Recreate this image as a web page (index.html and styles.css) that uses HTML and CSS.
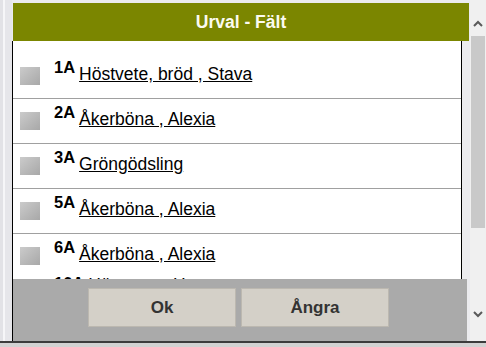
FILE: index.html
```html
<!DOCTYPE html>
<html lang="sv">
<head>
<meta charset="utf-8">
<title>Urval - Fält</title>
<link rel="stylesheet" href="styles.css">
</head>
<body>
<div class="screen">
  <div class="main">
    <div class="gutter"></div>
    <div class="dialog">
      <div class="title">Urval - Fält</div>
      <div class="frame">
        <div class="listwrap">
          <div class="list">
            <div class="row"><span class="cb"></span><span class="code">1A</span><a class="label" href="#">Höstvete, bröd , Stava</a></div>
            <div class="row"><span class="cb"></span><span class="code">2A</span><a class="label" href="#">Åkerböna , Alexia</a></div>
            <div class="row"><span class="cb"></span><span class="code">3A</span><a class="label" href="#">Gröngödsling</a></div>
            <div class="row"><span class="cb"></span><span class="code">5A</span><a class="label" href="#">Åkerböna , Alexia</a></div>
            <div class="row last"><span class="cb"></span><span class="code">6A</span><a class="label" href="#">Åkerböna , Alexia</a></div>
            <div class="row partial"><span class="cb"></span><span class="code">10A</span><a class="label" href="#">Höstraps , Hornet</a></div>
          </div>
        </div>
        <div class="actions">
          <button class="btn" type="button">Ok</button>
          <button class="btn" type="button">Ångra</button>
        </div>
      </div>
    </div>
    <div class="scrollbar">
      <div class="sb-up">
        <svg width="10" height="7" viewBox="0 0 10 7"><polyline points="1,6 5,2 9,6" fill="none" stroke="#5a5a5a" stroke-width="2"/></svg>
      </div>
      <div class="sb-thumb"></div>
      <div class="sb-space"></div>
      <div class="sb-down">
        <svg width="10" height="7" viewBox="0 0 10 7"><polyline points="1,1 5,5 9,1" fill="none" stroke="#5a5a5a" stroke-width="2"/></svg>
      </div>
    </div>
  </div>
  <div class="bottomline"></div>
</div>
</body>
</html>
```
FILE: styles.css
```css
html, body {
  margin: 0;
  padding: 0;
}
body {
  width: 486px;
  height: 347px;
  overflow: hidden;
  background: #e9e9ec;
  font-family: "Liberation Sans", Arial, sans-serif;
}
.screen {
  display: flex;
  flex-direction: column;
  height: 347px;
}
.main {
  display: flex;
  height: 341px;
}
.gutter {
  width: 12px;
  background: linear-gradient(to right, #e2e2e6 0 3px, #f6f6f8 3px 5px, #e6e6ea 5px);
}
.dialog {
  width: 458px;
  box-sizing: border-box;
  padding-top: 3px;
  display: flex;
  flex-direction: column;
  background: #ebebee;
}
.title {
  height: 38px;
  width: 456px;
  margin-left: 1px;
  background: #7b8600;
  color: #fbfbf0;
  font-weight: bold;
  font-size: 17.5px;
  display: flex;
  align-items: center;
  justify-content: center;
}
.frame {
  flex: 1;
  border-left: 1px solid #000;
  display: flex;
  flex-direction: column;
}
.listwrap {
  height: 238px;
  display: flex;
}
.list {
  width: 449px;
  box-sizing: border-box;
  background: #fff;
  border-right: 1px solid #000;
  overflow: hidden;
  padding-top: 13px;
}
.row {
  display: flex;
  align-items: flex-start;
  height: 44px;
  padding-left: 7px;
  border-bottom: 1px solid #a0a0a0;
}
.row.last {
  height: 36px;
  border-bottom: none;
}
.row.partial .label {
  margin-top: 5px;
}
.cb {
  flex: none;
  width: 20px;
  height: 18px;
  margin-top: 13px;
  background: linear-gradient(to bottom right, #cbcbcb, #a8a8a8);
}
.code {
  margin-left: 14px;
  margin-top: 4px;
  font-weight: bold;
  font-size: 16.5px;
  line-height: 18px;
  color: #000;
}
.label {
  margin-left: 4px;
  margin-top: 10px;
  font-size: 17.5px;
  line-height: 20px;
  color: #000;
  text-decoration: underline;
  white-space: nowrap;
}
.actions {
  height: 62px;
  width: 454px;
  box-sizing: border-box;
  background: #aaaaaa;
  display: flex;
  justify-content: center;
  align-items: flex-start;
  gap: 5px;
  padding-top: 9px;
  padding-right: 3px;
}
.btn {
  width: 148px;
  height: 39px;
  background: #d4d0c8;
  border: 1px solid #bcb8b0;
  font-family: "Liberation Sans", Arial, sans-serif;
  font-weight: bold;
  font-size: 17px;
  color: #333;
  padding: 0;
}
.scrollbar {
  width: 16px;
  background: #f0f0f0;
  display: flex;
  flex-direction: column;
  align-items: center;
}
.sb-up {
  height: 36px;
  display: flex;
  align-items: flex-end;
  padding-bottom: 9px;
  box-sizing: border-box;
}
.sb-thumb {
  width: 14px;
  height: 192px;
  background: #c9c9c9;
}
.sb-space {
  flex: 1;
}
.sb-down {
  height: 30px;
  box-sizing: border-box;
  display: flex;
  align-items: flex-start;
}
.bottomline {
  height: 6px;
  box-sizing: border-box;
  border-top: 2px solid #3c3c3c;
  background: #d2d2d2;
}
```
